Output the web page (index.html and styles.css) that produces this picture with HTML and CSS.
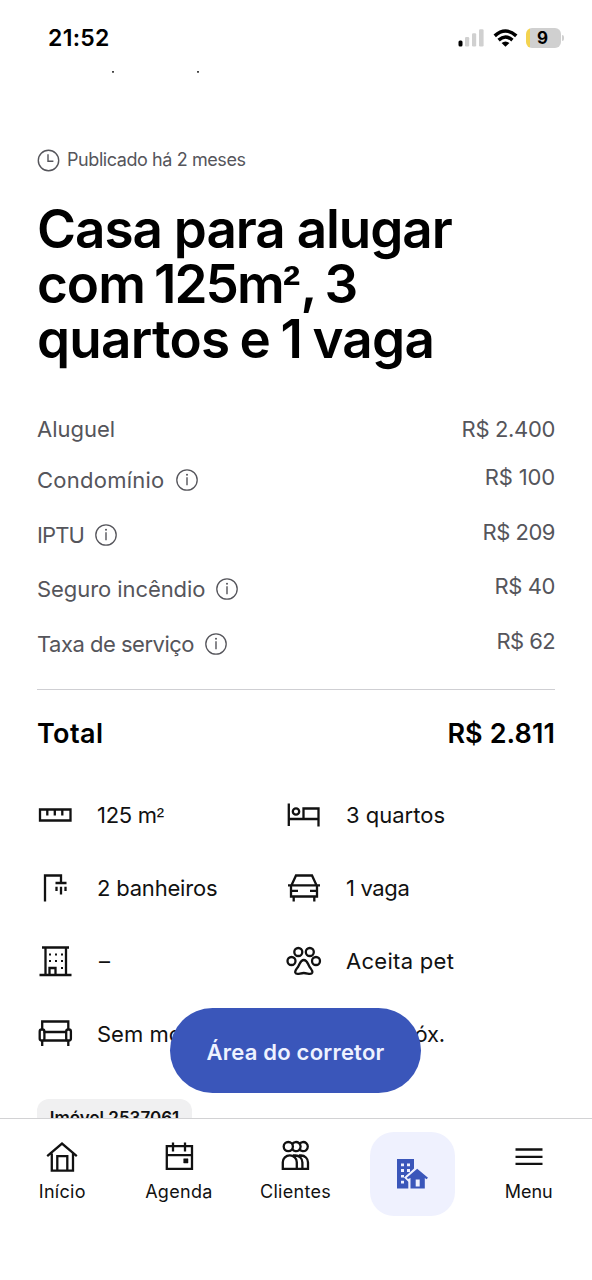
FILE: index.html
```html
<!DOCTYPE html>
<html lang="pt-BR">
<head>
<meta charset="utf-8">
<title>Casa para alugar</title>
<link rel="stylesheet" href="styles.css">
</head>
<body>
<div class="screen">
  <header class="status">
    <span class="time">21:52</span>
    <div class="status-icons">
      <svg width="27" height="18" viewBox="0 0 27 18"><rect x="0.5" y="11.5" width="4" height="6" rx="1.5"/><g fill="#d0d0d0"><rect x="7" y="8" width="4.2" height="9.5" rx="1.2"/><rect x="14" y="4.2" width="4.2" height="13.3" rx="1.2"/><rect x="21" y="0.2" width="4.6" height="17.3" rx="1.2"/></g></svg>
      <svg class="wifi" width="25" height="18" viewBox="0 0 26 18"><g fill="none" stroke="#000" stroke-width="3.6"><path d="M1.8 6.8Q13-3.4 24.2 6.8"/><path d="M5.8 11.2Q13 4.8 20.2 11.2"/></g><path d="M8.9 14.2Q13 10.9 17.1 14.2L13 18Z"/></svg>
      <div class="battery"><span class="battery-text">9</span></div>
      <span class="battery-cap"></span>
    </div>
  </header>
  <main class="content">
    <div class="peek"><i></i><i></i></div>
    <p class="published">
      <svg width="23" height="23" viewBox="0 0 23 23" fill="none" stroke="#55555b" stroke-width="1.4"><circle cx="11.5" cy="11.5" r="10.2"/><path d="M11 5.3V12.2H16.4"/></svg>
      <span>Publicado há 2 meses</span>
    </p>
    <h1 class="title"><span class="t1">Casa para alugar</span><br><span class="t2">com <span class="area">125m<span class="sq">²</span>,</span> 3</span><br><span class="t3">quartos e 1 vaga</span></h1>
    <dl class="costs">
      <div class="cost cost-first"><dt><span class="c1">Aluguel</span></dt><dd class="d1">R$ 2.400</dd></div>
      <div class="cost"><dt><span class="c2">Condomínio</span><svg class="info" viewBox="0 0 22 22"><use href="#info"/></svg></dt><dd class="d2">R$ 100</dd></div>
      <div class="cost"><dt><span class="c3">IPTU</span><svg class="info" viewBox="0 0 22 22"><use href="#info"/></svg></dt><dd class="d3">R$ 209</dd></div>
      <div class="cost"><dt><span class="c4">Seguro incêndio</span><svg class="info" viewBox="0 0 22 22"><use href="#info"/></svg></dt><dd class="d4">R$ 40</dd></div>
      <div class="cost"><dt><span class="c5">Taxa de serviço</span><svg class="info" viewBox="0 0 22 22"><use href="#info"/></svg></dt><dd class="d5">R$ 62</dd></div>
    </dl>
    <div class="total"><span class="total-label">Total</span><span class="total-value">R$ 2.811</span></div>
    <ul class="features">
      <li><svg class="ficon" viewBox="0 0 36 36"><path d="M3 12.5H33.5V23.5H3ZM10.3 12.5V18.5M17.8 12.5V18.5M25.3 12.5V18.5"/></svg><span class="f1">125 m<span class="sq">²</span></span></li>
      <li><svg class="ficon" viewBox="0 0 36 36"><path d="M2.8 6.5V29M2.8 22H32.5M32.5 29.5V11.5H17.5V22"/><circle cx="10" cy="14.5" r="3.2"/></svg><span class="f2">3 quartos</span></li>
      <li><svg class="ficon" viewBox="0 0 36 36"><path d="M8 31.5V5.5H24V13M18.5 13H29.5M19.5 16.8V21M24 16.8V24.5M28.5 16.8V21"/></svg><span class="f3">2 banheiros</span></li>
      <li><svg class="ficon" viewBox="0 0 36 36"><path d="M5 16V26.5H31V16M2 15.3H34M5.5 15.3L10 5.5H26L30.5 15.3M5 20.8H12M24 20.8H31M7.7 26.5V31.5M28.3 26.5V31.5"/></svg><span class="f4">1 vaga</span></li>
      <li><svg class="ficon" viewBox="0 0 36 36"><path d="M2.5 32H34.5M5 4.5H32M8.5 4.5V32M29 4.5V32M12.5 32V25H18.5V32"/><path class="dots" d="M12 11.5H14M18 11.5H20M24 11.5H26M12 18H14M18 18H20M24 18H26M24 25H26"/></svg><span class="f5">–</span></li>
      <li><svg class="ficon" viewBox="0 0 36 36"><circle cx="12.3" cy="9" r="4"/><circle cx="23.8" cy="9" r="4"/><circle cx="5.5" cy="18" r="4"/><circle cx="30" cy="18" r="4"/><path d="M17.8 17C14.5 17 14 20.5 12.5 23C11.3 25.5 8.5 27.3 9.3 29.7C10.3 32.3 14 30 17.8 30C21.6 30 25.3 32.3 26.3 29.7C27.1 27.3 24.3 25.5 23.1 23C21.6 20.5 21.1 17 17.8 17Z"/></svg><span class="f6">Aceita pet</span></li>
      <li><svg class="ficon" viewBox="0 0 36 36"><path d="M5.2 14V5.5H31.3V14M6.5 16H30M6.5 24.5H30M5.2 25V30M31.3 25V30"/><rect x="2.7" y="13.5" width="4.7" height="11" rx="2"/><rect x="29.2" y="13.5" width="4.7" height="11" rx="2"/></svg><span class="f7">Sem mobília</span></li>
      <li class="plain"><span class="f8">Não próx.</span></li>
    </ul>
    <span class="chip">Imóvel 2537061</span>
    <button class="fab"><span>Área do corretor</span></button>
  </main>
  <nav class="nav">
    <a class="item"><svg class="nicon" viewBox="0 0 36 36"><path d="M3.2 16.5L18 4L32.8 16.5M7.8 14V31H29V14M13.3 31V16.5H23.3V31"/></svg><span class="n1">Início</span></a>
    <a class="item"><svg class="nicon" viewBox="0 0 36 36"><path d="M5.8 6.5H31V29.3H5.8ZM5.8 15.5H31M12 3V12M24 3V12"/><path d="M22.7 19.2H27V23.4H22.7Z" fill="#111" stroke-width=".5"/></svg><span class="n2">Agenda</span></a>
    <a class="item"><svg class="nicon" viewBox="0 0 36 36"><circle cx="11.3" cy="7" r="4.6"/><path d="M15.2 4.4A4.6 4.6 0 1 1 15.2 9.6M22.4 4.4A4.6 4.6 0 1 1 22.4 9.6M5.8 29.2V22.6A7 6.9 0 0 1 19.8 22.6V29.2ZM16 15.9H18.5A6.9 6.9 0 0 1 25.4 22.8V29.2H19.8M22 15.9H24A6.9 6.9 0 0 1 31 22.8V29.2H25.4"/></svg><span class="n3">Clientes</span></a>
    <a class="item"><div class="active"><svg width="32" height="32" viewBox="0 0 32 32" fill="#3a56ba"><path fill-rule="evenodd" d="M1 1H18V10.5L9.5 18.5L12.5 21V30.5H1ZM5 5.5V8.3H8V5.5ZM11 5.5V8.3H14V5.5ZM5 11V14H8V11ZM11 11V14H14V11ZM5 17V19.6H8V17ZM5 22.8V25.5H8V22.8Z"/><path d="M21.2 8.5L8 19.4L12.6 24V31H14.5V20H32Z" fill="#eff1fe"/><path fill-rule="evenodd" d="M21.2 10.8L32 19.8L30.5 21.2L28.8 20V30.5H14.5V20L12 21L10.7 19.7ZM19.7 21.5V28.5H23.7V21.5Z"/></svg></div></a>
    <a class="item"><svg class="nicon" viewBox="0 0 36 36"><path d="M4.5 9.9H31.5M4.5 17.2H31.5M4.5 24.2H31.5"/></svg><span class="n5">Menu</span></a>
  </nav>
</div>
<svg width="0" height="0" class="defs"><symbol id="info" viewBox="0 0 22 22"><circle cx="11" cy="11" r="10.2" fill="none" stroke="#55555b" stroke-width="1.3"/><path d="M11 8.3V16.2" stroke="#55555b" stroke-width="1.4"/><circle cx="11" cy="5.8" r="1" fill="#55555b"/></symbol></svg>
</body>
</html>
```
FILE: styles.css
```css
* { box-sizing: border-box; }
body, h1, p, dl, dd, ul { margin: 0; padding: 0; }
body { font-family: Inter, "Liberation Sans", sans-serif; background: #fff; color: #111; overflow: hidden; }
.defs { position: absolute; }
.screen { width: 592px; height: 1280px; display: flex; flex-direction: column; }

.status { flex: none; height: 71px; padding: 4px 28px 0 48px; display: flex; align-items: center; justify-content: space-between; color: #000; }
.time { font-size: 23px; font-weight: 600; letter-spacing: .3px; }
.status-icons { display: flex; align-items: center; }
.wifi { margin: 0 8px 0 8px; }
.battery { width: 35px; height: 20px; border-radius: 6px; display: grid; place-items: center; background: linear-gradient(90deg, #f3d350 4px, #d0d0d0 4px); }
.battery-text { font-size: 17px; line-height: 20px; font-weight: 700; margin-right: 2px; }
.battery-cap { width: 2px; height: 6px; margin-left: 1px; border-radius: 0 3px 3px 0; background: #d0d0d0; }

.content { position: relative; height: 1047px; flex: none; overflow: hidden; padding: 0 37px; display: flex; flex-direction: column; align-items: stretch; }
.content > * { flex: none; }
.peek { height: 2px; display: flex; gap: 83px; padding-left: 75px; }
.peek i { width: 2px; height: 1.5px; background: #444; border-radius: 0 0 1px 1px; }
.published { margin-top: 73px; height: 28px; display: flex; align-items: center; gap: 7px; color: #55555b; font-size: 18px; line-height: 28px; letter-spacing: -.42px; }
.published svg { margin-top: 1px; }
.title { margin-top: 28px; font-size: 53px; line-height: 55px; font-weight: 600; color: #000; white-space: nowrap; }
.sq { font-family: "Liberation Sans", sans-serif; line-height: 0; }
.t1 { letter-spacing: -1.05px; word-spacing: -.3px; }
.t2 { letter-spacing: -1px; word-spacing: -3.3px; }
.area { letter-spacing: -1.9px; }
.area .sq { letter-spacing: 0; }
.t3 { letter-spacing: -.75px; word-spacing: -2.3px; }

.costs { margin-top: 37px; border-bottom: 1px solid #cfcfd3; height: 286px; color: #55555b; font-size: 22px; line-height: 30px; }
.cost { height: 54.6px; display: flex; justify-content: space-between; align-items: center; }
.cost-first { height: 46px; padding-top: 3px; }
.cost dt { display: flex; align-items: center; gap: 11px; }
.cost:not(.cost-first) dt { padding-top: 6px; }
.info { width: 22px; height: 22px; }
.c2 { letter-spacing: .25px; }
.c3 { letter-spacing: -.9px; }
.c4 { letter-spacing: -.07px; }
.c5 { letter-spacing: -.5px; }
.d1 { letter-spacing: -.35px; }
.d2 { letter-spacing: -.15px; }
.d3 { letter-spacing: -.5px; }
.d4 { letter-spacing: -.4px; }
.d5 { letter-spacing: -.6px; }
.total { margin-top: 21px; height: 44px; display: flex; justify-content: space-between; align-items: center; font-size: 27px; font-weight: 600; color: #000; }
.total-label { letter-spacing: .4px; }
.total-value { letter-spacing: .1px; }

.features { list-style: none; margin-top: 23px; display: grid; grid-template-columns: 249px 249px; grid-auto-rows: 73px; font-size: 22px; white-space: nowrap; }
.features li { display: flex; align-items: center; gap: 24px; }
.features .plain { padding-left: 60px; }
.ficon { width: 36px; height: 36px; margin: 0 .5px 0 -.5px; fill: none; stroke: #111; stroke-width: 2.3; flex: none; }
.dots { stroke-width: 2; }
.f1 { letter-spacing: -.3px; }
.f3 { letter-spacing: -.2px; }
.f4 { letter-spacing: -.35px; }
.f5 { padding-left: 2px; }
.f6 { letter-spacing: .3px; }
.f8 { letter-spacing: -.2px; }
.chip { align-self: flex-start; margin-top: 29px; width: 155px; height: 40px; border-radius: 12px; background: #f0f0f1; text-align: center; font-size: 17px; line-height: 39px; font-weight: 600; }
.fab { position: absolute; left: 170px; top: 937px; width: 251px; height: 85px; border: 0; border-radius: 43px; background: #3a56ba; color: #eef2ff; font: 600 22px/1.4 Inter, sans-serif; letter-spacing: .22px; padding: 4px 0 0; white-space: nowrap; }

.nav { flex: 1; border-top: 1.5px solid #d2d2d4; padding: 13px 5px 0 4px; display: grid; grid-template-columns: repeat(5, 1fr); background: #fff; }
.item { display: flex; flex-direction: column; align-items: center; padding-top: 7px; font-size: 18px; line-height: 24px; }
.nicon { width: 36px; height: 36px; margin-bottom: 5px; fill: none; stroke: #111; stroke-width: 2.3; transform: translateY(.6px); }
.n1, .n2, .n3 { letter-spacing: .3px; }
.active { margin-top: -7px; width: 85px; height: 84px; border-radius: 24px; background: #eff1fe; display: grid; place-items: center; }
```
